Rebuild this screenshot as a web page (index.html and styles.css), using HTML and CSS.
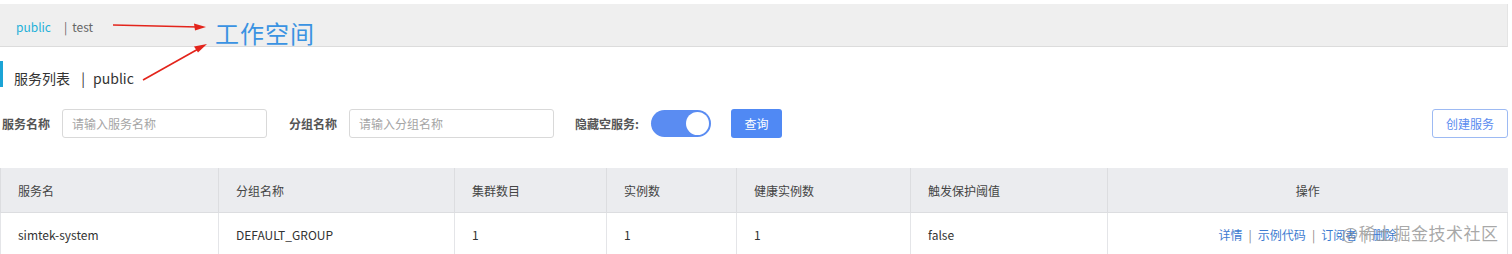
FILE: index.html
```html
<!DOCTYPE html>
<html lang="zh-CN">
<head>
<meta charset="UTF-8">
<title>服务列表</title>
<link rel="stylesheet" href="styles.css">
</head>
<body>
<div class="page">
  <div class="ns-bar">
    <span class="ns-active">public</span>
    <span class="ns-sep">|</span>
    <span class="ns-item">test</span>
  </div>

  <div class="note-title">工作空间</div>
  <svg class="note-arrows" width="240" height="100" viewBox="0 0 240 100">
    <line x1="113" y1="25" x2="198" y2="27" stroke="#e3241b" stroke-width="1.6"/>
    <polygon points="206,27 194,23.5 195,30.5" fill="#e3241b"/>
    <line x1="143" y1="80" x2="200" y2="48" stroke="#e3241b" stroke-width="1.6"/>
    <polygon points="207,44 194,46.5 198,52.5" fill="#e3241b"/>
  </svg>

  <div class="page-title">
    <span>服务列表</span>
    <span class="title-sep">|</span>
    <span>public</span>
  </div>

  <div class="filters">
    <div class="filter-group">
      <label class="filter-label">服务名称</label>
      <input class="filter-input" type="text" placeholder="请输入服务名称">
      <label class="filter-label gap-l">分组名称</label>
      <input class="filter-input" type="text" placeholder="请输入分组名称">
      <label class="filter-label gap-m">隐藏空服务:</label>
      <span class="switch"><span class="knob"></span></span>
      <button class="btn-primary">查询</button>
    </div>
    <button class="btn-outline">创建服务</button>
  </div>

  <table class="svc-table">
    <colgroup>
      <col style="width:218px">
      <col style="width:236px">
      <col style="width:152px">
      <col style="width:130px">
      <col style="width:174px">
      <col style="width:197px">
      <col>
    </colgroup>
    <thead>
      <tr>
        <th>服务名</th>
        <th>分组名称</th>
        <th>集群数目</th>
        <th>实例数</th>
        <th>健康实例数</th>
        <th>触发保护阈值</th>
        <th class="center">操作</th>
      </tr>
    </thead>
    <tbody>
      <tr>
        <td>simtek-system</td>
        <td>DEFAULT_GROUP</td>
        <td>1</td>
        <td>1</td>
        <td>1</td>
        <td>false</td>
        <td class="center">
          <a class="op">详情</a><span class="op-sep">|</span><a class="op">示例代码</a><span class="op-sep">|</span><a class="op">订阅者</a><span class="op-sep">|</span><a class="op">删除</a>
        </td>
      </tr>
    </tbody>
  </table>

  <div class="watermark">@稀土掘金技术社区</div>
</div>
</body>
</html>
```
FILE: styles.css
```css
body {
  margin: 0;
  background: #fff;
  font-family: "Noto Sans CJK SC", "Noto Sans", sans-serif;
  color: #333;
}

.page {
  position: relative;
  width: 1508px;
  padding-top: 4px;
  height: 250px;
  overflow: hidden;
}

/* namespace bar */
.ns-bar {
  height: 43px;
  box-sizing: border-box;
  background: #efefef;
  border-bottom: 1px solid #dcdcdc;
  border-right: 1px solid #e4e4e4;
  display: flex;
  align-items: center;
  padding-left: 16px;
  padding-top: 2px;
  font-size: 12px;
}

.ns-active {
  color: #1fb1d9;
}

.ns-sep {
  color: #666;
  margin-left: 13px;
  margin-right: 5px;
}

.ns-item {
  color: #666;
}

/* annotation */
.note-title {
  position: absolute;
  left: 215px;
  top: 15px;
  font-size: 24px;
  color: #3a93e2;
  letter-spacing: 1px;
}

.note-arrows {
  position: absolute;
  left: 0;
  top: 0;
}

/* title */
.page-title {
  margin-top: 14px;
  height: 26px;
  border-left: 3px solid #1ba4d6;
  padding-left: 11px;
  font-size: 14px;
  line-height: 34px;
  color: #333;
}

.title-sep {
  margin: 0 5px 0 8px;
}

/* filters */
.filters {
  display: flex;
  align-items: center;
  justify-content: space-between;
  margin-top: 22px;
  padding-left: 2px;
}

.filter-group {
  display: flex;
  align-items: center;
}

.filter-label {
  font-size: 12px;
  font-weight: bold;
  color: #555;
  margin-right: 12px;
}

.gap-l {
  margin-left: 22px;
}

.gap-m {
  margin-left: 21px;
}

.filter-input {
  width: 205px;
  height: 29px;
  box-sizing: border-box;
  border: 1px solid #d9d9d9;
  border-radius: 3px;
  padding: 0 9px;
  font-size: 12px;
  font-family: inherit;
}

.filter-input::placeholder {
  color: #a5a5a5;
}

.switch {
  display: inline-flex;
  align-items: center;
  justify-content: flex-end;
  width: 60px;
  height: 27px;
  border-radius: 14px;
  background: #5a8cf2;
  padding: 2px;
  box-sizing: border-box;
}

.knob {
  width: 23px;
  height: 23px;
  border-radius: 50%;
  background: #fff;
}

.btn-primary {
  margin-left: 20px;
  width: 51px;
  height: 29px;
  border: none;
  border-radius: 3px;
  background: #5089f4;
  color: #fff;
  font-size: 12px;
  font-family: inherit;
}

.btn-outline {
  width: 76px;
  height: 29px;
  border: 1px solid #9dbaf3;
  border-radius: 3px;
  background: #fff;
  color: #5a8bef;
  font-size: 12px;
  font-family: inherit;
}

/* table */
.svc-table {
  margin-top: 30px;
  width: 1508px;
  table-layout: fixed;
  border-collapse: collapse;
  font-size: 12px;
}

.svc-table th {
  height: 44px;
  background: #ebecef;
  font-weight: normal;
  color: #444;
  text-align: left;
  padding: 0 17px;
  border-left: 1px solid #dcdde0;
  border-bottom: 1px solid #dcdde0;
}

.svc-table td {
  height: 42px;
  color: #333;
  padding: 0 17px 2px;
  border-left: 1px solid #e4e5e8;
  border-right: 1px solid #e4e5e8;
}

.svc-table .center {
  text-align: center;
}

.op {
  color: #3d7bd0;
}

.op-sep {
  color: #888;
  margin: 0 6px;
}

.watermark {
  position: absolute;
  left: 1342px;
  top: 220px;
  font-size: 17px;
  color: rgba(140, 140, 140, 0.75);
  letter-spacing: 0.5px;
}
```
